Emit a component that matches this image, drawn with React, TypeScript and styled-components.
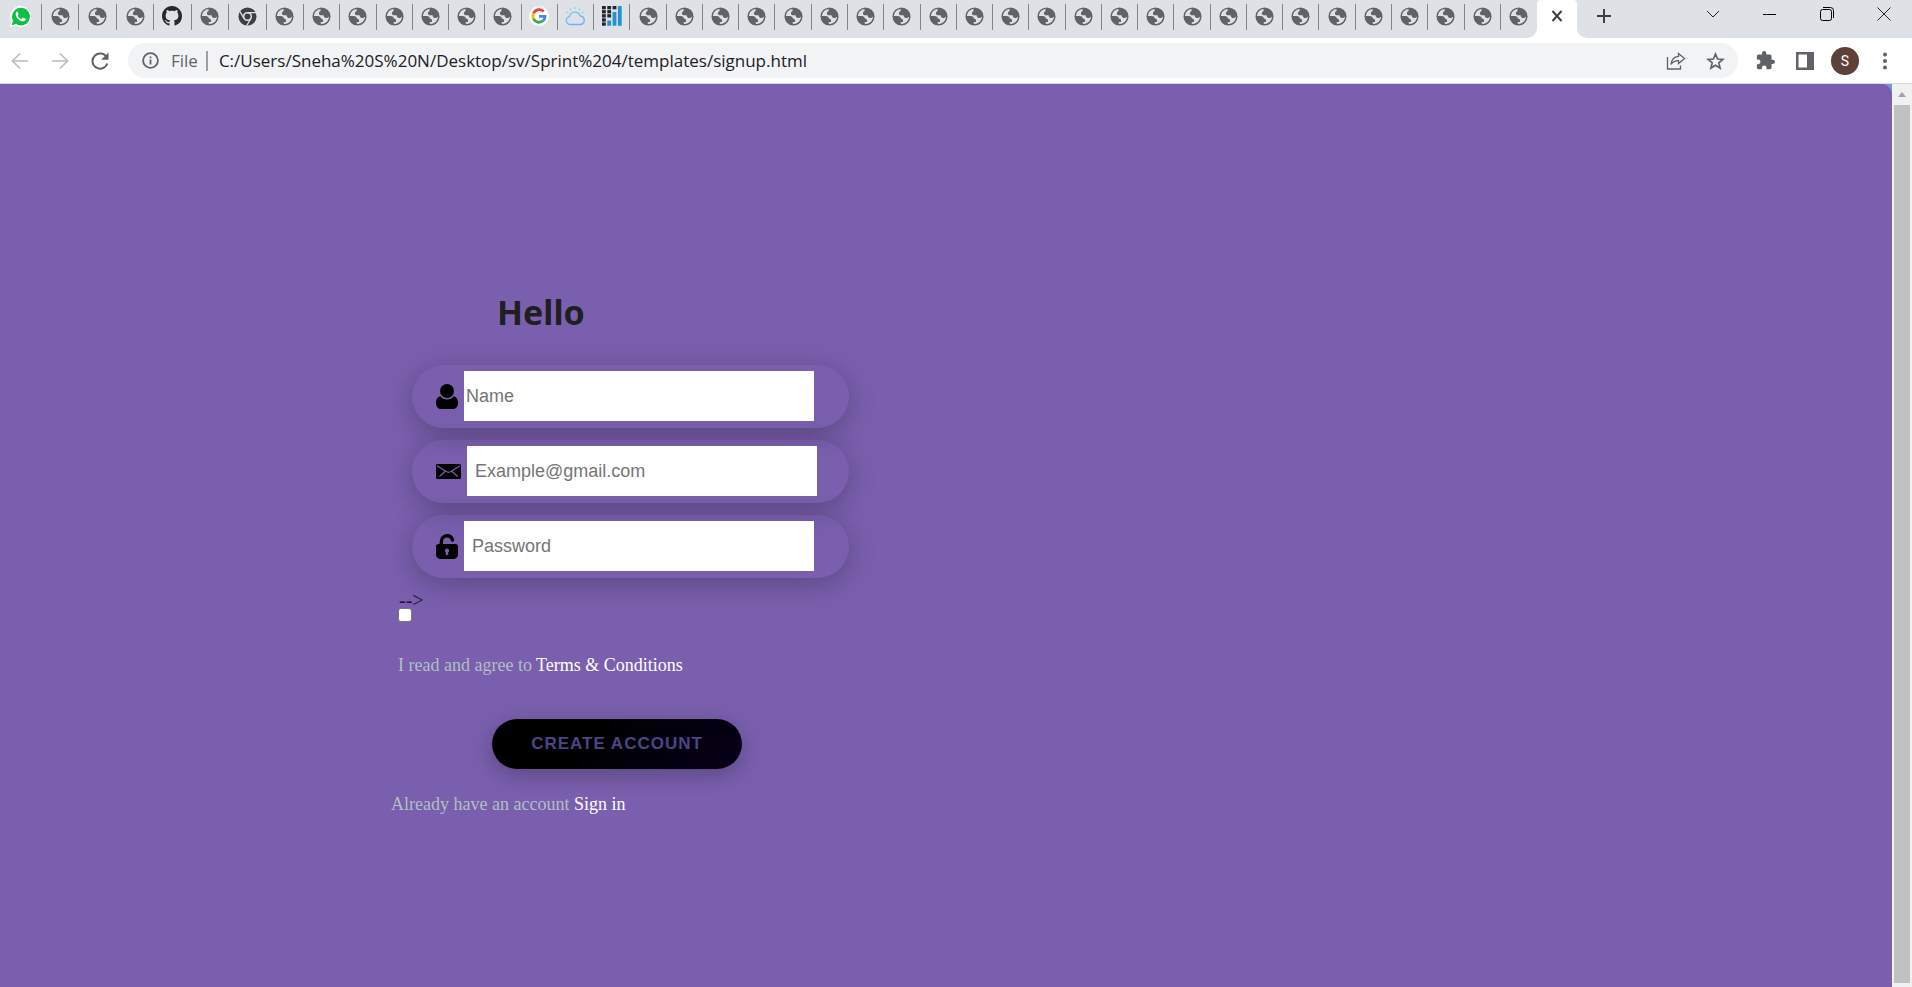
import React from "react";
import styled, { createGlobalStyle } from "styled-components";

const GlobalStyle = createGlobalStyle`
  *, *::before, *::after { box-sizing: border-box; }
  html, body, #root { height: 100%; }
  body { margin: 0; overflow: hidden; }
`;

const Window = styled.div`
  display: flex;
  flex-direction: column;
  min-height: 100vh;
  font-family: "Open Sans", sans-serif;
`;

const TabStrip = styled.div`
  display: flex;
  height: 38px;
  background: #dee1e6;
`;

const TabGroup = styled.div<{ $width: number }>`
  display: flex;
  width: ${(p) => p.$width}px;
  height: 32px;
`;

const Tab = styled.button<{ $last?: boolean }>`
  flex: 1 1 0;
  display: flex;
  align-items: center;
  justify-content: center;
  min-width: 0;
  margin: 4px 0 2px;
  padding: 0 0 2px;
  border: 0;
  border-right: 1px solid ${(p) => (p.$last ? "transparent" : "#80868b")};
  background: none;
`;

const ActiveTab = styled.div`
  display: flex;
  width: 40px;
  height: 38px;
  padding-bottom: 6px;
  border-radius: 4px 4px 0 0;
  background: #fff;
`;

const TabFlare = styled.div<{ $side: "left" | "right" }>`
  align-self: flex-end;
  width: 10px;
  height: 10px;
  margin-left: ${(p) => (p.$side === "left" ? "-10px" : "0")};
  background: #fff;
  &::before {
    content: "";
    display: block;
    height: 10px;
    background: #dee1e6;
    border-radius: ${(p) => (p.$side === "left" ? "0 0 10px 0" : "0 0 0 10px")};
  }
`;

const PlainButton = styled.button<{ $width: number }>`
  display: flex;
  align-items: center;
  justify-content: center;
  width: ${(p) => p.$width}px;
  padding: 0;
  border: 0;
  background: none;
`;

const NewTab = styled(PlainButton)`
  height: 32px;
`;

const WindowControls = styled.div`
  display: flex;
  height: 28px;
  margin-left: auto;
`;

const Toolbar = styled.div`
  display: flex;
  align-items: center;
  height: 46px;
  padding-right: 7px;
  border-bottom: 1px solid #dadce0;
  background: #fff;
`;

const NavButtons = styled.div`
  display: flex;
  width: 128px;
`;

const Omnibox = styled.div`
  display: flex;
  flex: 1;
  align-items: center;
  height: 35px;
  padding: 0 4px 0 14px;
  border-radius: 18px;
  background: #f1f3f4;
  font-size: 17px;
`;

const Scheme = styled.span`
  margin-left: 12px;
  padding-right: 8px;
  border-right: 2px solid #9aa0a6;
  line-height: 20px;
  color: #5f6368;
`;

const Address = styled.input`
  flex: 1;
  min-width: 0;
  padding: 0 0 0 11px;
  border: 0;
  background: none;
  font: inherit;
  color: #202124;
`;

const Actions = styled.div`
  display: flex;
  align-items: center;
  padding-left: 7px;
`;

const Avatar = styled.span`
  width: 28px;
  border-radius: 50%;
  background: #5d4037;
  color: #fff;
  font: 14px/28px Roboto, sans-serif;
  text-align: center;
`;

const Viewport = styled.div`
  display: flex;
  flex: 1;
  background: #7596e8;
`;

const Page = styled.main`
  flex: 1;
  padding: 204px 0 0 391px;
  border-top-right-radius: 10px;
  background: #7a5fae;
`;

const Scrollbar = styled.div`
  display: flex;
  flex-direction: column;
  width: 20px;
  padding: 0 2px 4px;
  background: #f1f1f1;
`;

const ScrollUp = styled.div`
  display: flex;
  align-items: center;
  justify-content: center;
  height: 21px;
`;

const Thumb = styled.div`
  flex: 1;
  background: #c1c1c1;
`;

const Form = styled.form`
  display: flex;
  flex-direction: column;
  width: 458px;
  font-family: "Liberation Serif", serif;
  font-size: 18px;
`;

const Title = styled.h1`
  margin: 0 0 28px;
  padding-left: 106px;
  font: 700 34px/49px "Noto Sans", sans-serif;
  color: #1f1f1f;
`;

const Fields = styled.div`
  display: flex;
  flex-direction: column;
  gap: 12px;
  padding-left: 21px;
`;

const Field = styled.label`
  display: flex;
  align-items: center;
  height: 63px;
  padding: 0 24px;
  border-radius: 32px;
  box-shadow: 0 6px 28px rgba(0, 0, 0, 0.25);
`;

const FieldInput = styled.input<{ $indent: number }>`
  width: 350px;
  height: 50px;
  margin: 0 0 1px 6px;
  padding: 0 0 0 ${(p) => p.$indent}px;
  border: 0;
  border-radius: 0;
  background: #fff;
  font: 18px "Liberation Sans", sans-serif;
  outline: 0;
  &::placeholder { color: #757575; opacity: 1; }
`;

const Stray = styled.span`
  padding: 14px 0 0 8px;
  font-size: 20px;
  line-height: 16px;
  color: #1f1235;
`;

const Agreement = styled.div`
  display: flex;
  flex-direction: column;
  align-items: flex-start;
  gap: 32px;
  padding-left: 7px;
`;

const Checkbox = styled.input`
  appearance: none;
  width: 14px;
  height: 14px;
  margin: 0;
  border: 1px solid #767676;
  border-radius: 3px;
  background: #fff;
`;

const Note = styled.label`
  line-height: 22px;
  color: #b2bec3;
`;

const Prompt = styled.p`
  margin: 24px 0 0;
  line-height: 22px;
  color: #b2bec3;
`;

const Link = styled.a`
  color: #fff;
  text-decoration: none;
`;

const Submit = styled.button`
  width: 250px;
  height: 50px;
  margin: 43px 0 0 101px;
  border: 0;
  border-radius: 25px;
  background: linear-gradient(135deg, #000 40%, #06001a);
  box-shadow: 0 6px 22px rgba(0, 0, 0, 0.25);
  color: #4d4488;
  font: 700 17px "Liberation Sans", sans-serif;
  letter-spacing: 1px;
`;

const Globe = () => (
  <svg width="19" height="19" viewBox="0 0 20 20">
    <circle cx="10" cy="10" r="9.5" fill="#5f6368" />
    <path d="M9 2.200c-3.800.4-6.800 3.700-6.900 7.400h3.900c1.900 0 3.300 1 3.300 2.600 1.500.1 2.300.8 2.300 2.100v1.600H9.200v1.800c4.700.7 8.700-3 8.700-7.600-.5 1-1.300 1.500-2.500 1.500-1.900 0-3.100-1.200-3.200-3H9.300c-1.300 0-2-.8-2-2s.7-1.800 1.700-2z" fill="#dee1e6" />
  </svg>
);

const WhatsApp = () => (
  <svg width="21" height="21" viewBox="0 0 24 24">
    <path d="M0 24l1.700-6.200A12 12 0 1 1 6.300 22.400z" fill="#fff" />
    <path d="M1.900 22l1.500-5.300A10.200 10.200 0 1 1 7 20.700z" fill="#0cc143" />
    <path d="M8.300 6.300c-.4 0-1.800.7-1.800 2.700 0 4.200 4.800 8.500 8.600 8.500 1.600 0 2.900-1.100 2.900-2.300 0-.5-.1-.6-.5-.8l-2.300-1.100c-.4-.1-.6 0-.8.3l-.9 1.100c-.2.2-.4.2-.7.1-1.700-.7-2.900-1.800-3.900-3.500-.1-.3-.1-.4.1-.6l.7-1c.1-.2.1-.4 0-.6l-1-2.300c-.1-.4-.2-.5-.4-.5z" fill="#fff" />
  </svg>
);

const GitHub = () => (
  <svg width="20" height="20" viewBox="0 0 16 16" fill="#24292f">
    <path d="M8 0C3.580 0 0 3.580 0 8c0 3.540 2.290 6.530 5.470 7.590.4.070.55-.17.55-.38 0-.19-.01-.82-.01-1.490-2.010.37-2.530-.49-2.690-.94-.09-.23-.48-.94-.82-1.130-.28-.15-.68-.52-.01-.53.63-.01 1.080.58 1.230.82.72 1.210 1.870.87 2.330.66.070-.52.28-.87.51-1.070-1.780-.2-3.640-.89-3.640-3.950 0-.87.31-1.590.82-2.150-.08-.2-.36-1.020.08-2.120 0 0 .67-.21 2.200.82.64-.18 1.320-.27 2-.27s1.360.09 2 .27c1.530-1.040 2.200-.82 2.200-.82.44 1.100.16 1.920.08 2.120.51.56.82 1.270.82 2.150 0 3.070-1.870 3.750-3.650 3.950.29.25.54.73.54 1.480 0 1.070-.01 1.930-.01 2.200 0 .21.15.46.55.38A8.010 8.010 0 0 0 16 8c0-4.420-3.580-8-8-8z" />
  </svg>
);

const Chrome = () => (
  <svg width="19" height="19" viewBox="0 0 20 20">
    <circle cx="10" cy="10" r="9.500" fill="#3c4043" />
    <circle cx="10" cy="10" r="4.800" fill="#dee1e6" />
    <circle cx="10" cy="10" r="3.200" fill="#3c4043" />
    <path d="M10 5.800H19M6.300 12L1.900 4.600M13.700 12L9.200 19.500" stroke="#dee1e6" strokeWidth="1.300" />
  </svg>
);

const Google = () => (
  <svg width="20" height="20" viewBox="0 0 20 20">
    <circle cx="10" cy="10" r="10" fill="#fff" />
    <g fill="none" strokeWidth="2.800">
      <path d="M14.600 5.500A6.100 6.100 0 0 0 4.600 7.200" stroke="#ea4335" />
      <path d="M4.700 7.100a6.100 6.100 0 0 0 0 5.900" stroke="#fbbc05" />
      <path d="M4.600 12.800a6.100 6.100 0 0 0 9.400 2" stroke="#34a853" />
      <path d="M13.900 14.900a6.100 6.100 0 0 0 2.100-4.500h-6" stroke="#4285f4" />
    </g>
  </svg>
);

const Cloud = () => (
  <svg width="21" height="21" viewBox="0 0 21 21" fill="none" strokeWidth="1.300">
    <defs>
      <linearGradient id="sky" x1="0" y1="0" x2="1" y2="1">
        <stop offset="0" stopColor="#62cdf2" />
        <stop offset="1" stopColor="#7aa5fa" />
      </linearGradient>
    </defs>
    <path d="M5 18.500a4 4 0 0 1-.5-7.900 5.500 5.500 0 0 1 10.700-.6 4.300 4.300 0 0 1 .6 8.500z" stroke="url(#sky)" />
    <path d="M10 1v2M5 2.500l1 1.800M1.500 6l1.800 1M15 2.500l-1 1.800M18.500 6l-1.800 1" stroke="#79d8f5" />
  </svg>
);

const barDots = [
  [0, 0], [1, 0], [2, 0],
  [0, 1], [1, 1],
  [0, 2], [1, 2],
  [0, 3],
  [0, 4],
];

const Bars = () => (
  <svg width="20" height="20" viewBox="0 0 20 20">
    {barDots.map(([col, row]) => (
      <rect key={`${col}-${row}`} x={col * 5.3} y={row * 4.1} width="3.800" height="3.300" fill="#20242b" />
    ))}
    <path d="M5.300 14.500h3.800v5.200H5.300zM10.600 6h3.800v13.700h-3.800zM15.900 0h3.800v19.700h-3.800z" fill="#2492cf" />
  </svg>
);

const Arrow = ({ back }: { back?: boolean }) => (
  <svg width="18" height="18" viewBox="0 0 18 18" fill="none" stroke="#babcbe" strokeWidth="1.700">
    <path d={back ? "M17 9H2M9 1.500L1.500 9 9 16.500" : "M1 9h15M9 1.500L16.500 9 9 16.500"} />
  </svg>
);

const Reload = () => (
  <svg width="18" height="18" viewBox="0 0 18 18">
    <path d="M15.800 5.500A7.600 7.600 0 1 0 16.300 11.500" fill="none" stroke="#5f6368" strokeWidth="2" />
    <path d="M17.500.5v7.300h-7.300z" fill="#5f6368" />
  </svg>
);

const Info = () => (
  <svg width="17" height="17" viewBox="0 0 17 17">
    <circle cx="8.500" cy="8.500" r="7.400" fill="none" stroke="#5f6368" strokeWidth="1.800" />
    <path d="M7.600 7.500h1.800v5H7.600zM7.600 4.400h1.800v1.800H7.600z" fill="#5f6368" />
  </svg>
);

const Share = () => (
  <svg width="20" height="18" viewBox="0 0 20 18" fill="none" stroke="#5f6368" strokeWidth="1.300">
    <path d="M1.500 5v12h13v-3.500" />
    <path d="M12.500 1.500l6 5-6 5V8.600C9 8.600 6.700 9.800 5 12.500 5.400 8 8 4.800 12.500 4.300z" />
  </svg>
);

const Star = () => (
  <svg width="19" height="18" viewBox="0 0 19 18" fill="none" stroke="#5f6368" strokeWidth="1.700">
    <path d="M9.500 2l2.100 5 5.300.4-4.100 3.500 1.300 5.200-4.600-2.800-4.600 2.800 1.300-5.200L2.100 7.400 7.400 7z" />
  </svg>
);

const Puzzle = () => (
  <svg width="19" height="19" viewBox="1 1 22 22" fill="#5f6368">
    <path d="M20.500 11H19V7c0-1.100-.9-2-2-2h-4V3.500a2.500 2.500 0 0 0-5 0V5H4c-1.100 0-2 .9-2 2v3.800h1.500a2.700 2.700 0 0 1 0 5.400H2V20c0 1.100.9 2 2 2h3.800v-1.500a2.700 2.700 0 0 1 5.400 0V22H17c1.100 0 2-.9 2-2v-4h1.500a2.500 2.500 0 0 0 0-5z" />
  </svg>
);

const Panel = () => (
  <svg width="18" height="18" viewBox="0 0 18 18">
    <path d="M0 0h18v18H0zM2.500 2.500v13h8.500v-13z" fill="#5f6368" fillRule="evenodd" />
  </svg>
);

const Dots = () => (
  <svg width="6" height="18" viewBox="0 0 6 18" fill="#5f6368">
    <circle cx="3" cy="2.500" r="2" />
    <circle cx="3" cy="9" r="2" />
    <circle cx="3" cy="15.500" r="2" />
  </svg>
);

const Stroke = ({ d, size, color, weight }: { d: string; size: number; color: string; weight: number }) => (
  <svg width={size} height={size} viewBox={`0 0 ${size} ${size}`} fill="none" stroke={color} strokeWidth={weight}>
    <path d={d} />
  </svg>
);

const Person = () => (
  <svg width="22" height="25" viewBox="0 0 22 25">
    <circle cx="11" cy="7" r="7" />
    <path d="M4.300 12.300A8.600 8.600 0 0 0 17.700 12.300C20.500 13 22 15.500 22 18.700 22 23 19.500 25 17 25H5c-2.500 0-5-2-5-6.300 0-3.200 1.500-5.700 4.300-6.400z" />
  </svg>
);

const Envelope = () => (
  <svg width="25" height="15" viewBox="0 0 25 15">
    <rect width="25" height="15" rx="1.500" />
    <path d="M1 1.800L10 7.600Q12.500 9 15 7.600L24 1.800M3.500 12.500L9.500 7M21.500 12.500L15.500 7" fill="none" stroke="#7a5fae" strokeWidth="1.200" />
  </svg>
);

const Padlock = () => (
  <svg width="22" height="25" viewBox="0 0 22 25">
    <path d="M5.300 11V8.500C5.300 4.500 7.500 1.700 11 1.700c3 0 4.900 1.500 5.400 4.300" fill="none" stroke="#000" strokeWidth="3.400" strokeLinecap="round" />
    <path d="M2.500 10h17A2.500 2.500 0 0 1 22 12.500V20c0 3-2 5-5 5H5c-3 0-5-2-5-5v-7.500A2.500 2.500 0 0 1 2.500 10z" />
    <path d="M11 14.500a2.200 2.200 0 0 1 1.200 4v2.500H9.800v-2.500a2.200 2.200 0 0 1 1.200-4z" fill="#7a5fae" />
  </svg>
);

const leadingTabs = [Globe, Globe, Globe, GitHub, Globe, Chrome, Globe];
const trailingTabs = [
  ...Array(6).fill(Globe),
  Google,
  Cloud,
  Bars,
  ...Array(25).fill(Globe),
];

export default function App() {
  return (
    <Window>
      <GlobalStyle />
      <TabStrip>
        <TabGroup $width={42}>
          <Tab aria-label="WhatsApp"><WhatsApp /></Tab>
        </TabGroup>
        <TabGroup $width={262}>
          {leadingTabs.map((Icon, i) => (
            <Tab key={i} aria-label="Tab"><Icon /></Tab>
          ))}
        </TabGroup>
        <TabGroup $width={1233}>
          {trailingTabs.map((Icon, i) => (
            <Tab key={i} aria-label="Tab" $last={i === trailingTabs.length - 1}><Icon /></Tab>
          ))}
        </TabGroup>
        <TabFlare $side="left" />
        <ActiveTab>
          <PlainButton $width={40} aria-label="Close tab">
            <Stroke d="M1.500 1l9 10M10.500 1l-9 10" size={12} color="#3c4043" weight={2} />
          </PlainButton>
        </ActiveTab>
        <TabFlare $side="right" />
        <NewTab $width={34} aria-label="New tab">
          <Stroke d="M8 1v14M1 8h14" size={16} color="#3c4043" weight={2} />
        </NewTab>
        <WindowControls>
          <PlainButton $width={57} aria-label="Search tabs">
            <Stroke d="M1 4l6 6 6-6" size={14} color="#222" weight={1} />
          </PlainButton>
          <PlainButton $width={57} aria-label="Minimize">
            <Stroke d="M0 6.500h13" size={13} color="#000" weight={1} />
          </PlainButton>
          <PlainButton $width={57} aria-label="Restore">
            <svg width="14" height="14" viewBox="0 0 14 14" fill="none" stroke="#000">
              <rect x=".5" y="2.500" width="11" height="11" rx="2" />
              <path d="M3 .5h7.500a3 3 0 0 1 3 3V11" />
            </svg>
          </PlainButton>
          <PlainButton $width={57} aria-label="Close window">
            <Stroke d="M.5.5l13 13M13.500.5l-13 13" size={14} color="#222" weight={1} />
          </PlainButton>
        </WindowControls>
      </TabStrip>
      <Toolbar>
        <NavButtons>
          <PlainButton $width={40} aria-label="Back"><Arrow back /></PlainButton>
          <PlainButton $width={40} aria-label="Forward"><Arrow /></PlainButton>
          <PlainButton $width={40} aria-label="Reload"><Reload /></PlainButton>
        </NavButtons>
        <Omnibox>
          <Info />
          <Scheme>File</Scheme>
          <Address aria-label="Address" defaultValue="C:/Users/Sneha%20S%20N/Desktop/sv/Sprint%204/templates/signup.html" />
          <PlainButton $width={40} aria-label="Share"><Share /></PlainButton>
          <PlainButton $width={38} aria-label="Bookmark"><Star /></PlainButton>
        </Omnibox>
        <Actions>
          <PlainButton $width={40} aria-label="Extensions"><Puzzle /></PlainButton>
          <PlainButton $width={40} aria-label="Side panel"><Panel /></PlainButton>
          <PlainButton $width={40} aria-label="Profile"><Avatar>S</Avatar></PlainButton>
          <PlainButton $width={40} aria-label="Menu"><Dots /></PlainButton>
        </Actions>
      </Toolbar>
      <Viewport>
        <Page>
          <Form onSubmit={(e) => e.preventDefault()}>
            <Title>Hello</Title>
            <Fields>
              <Field>
                <Person />
                <FieldInput $indent={2} type="text" placeholder="Name" aria-label="Name" />
              </Field>
              <Field>
                <Envelope />
                <FieldInput $indent={8} type="email" placeholder="Example@gmail.com" aria-label="Email" />
              </Field>
              <Field>
                <Padlock />
                <FieldInput $indent={8} type="password" placeholder="Password" aria-label="Password" />
              </Field>
            </Fields>
            <Stray>--&gt;</Stray>
            <Agreement>
              <Checkbox type="checkbox" id="agree" />
              <Note htmlFor="agree">
                I read and agree to <Link href="#terms">Terms &amp; Conditions</Link>
              </Note>
            </Agreement>
            <Submit type="submit">CREATE ACCOUNT</Submit>
            <Prompt>
              Already have an account <Link href="#signin">Sign in</Link>
            </Prompt>
          </Form>
        </Page>
        <Scrollbar>
          <ScrollUp>
            <svg width="8" height="5" viewBox="0 0 8 5"><path d="M0 5l4-5 4 5z" fill="#a3a3a3" /></svg>
          </ScrollUp>
          <Thumb />
        </Scrollbar>
      </Viewport>
    </Window>
  );
}
